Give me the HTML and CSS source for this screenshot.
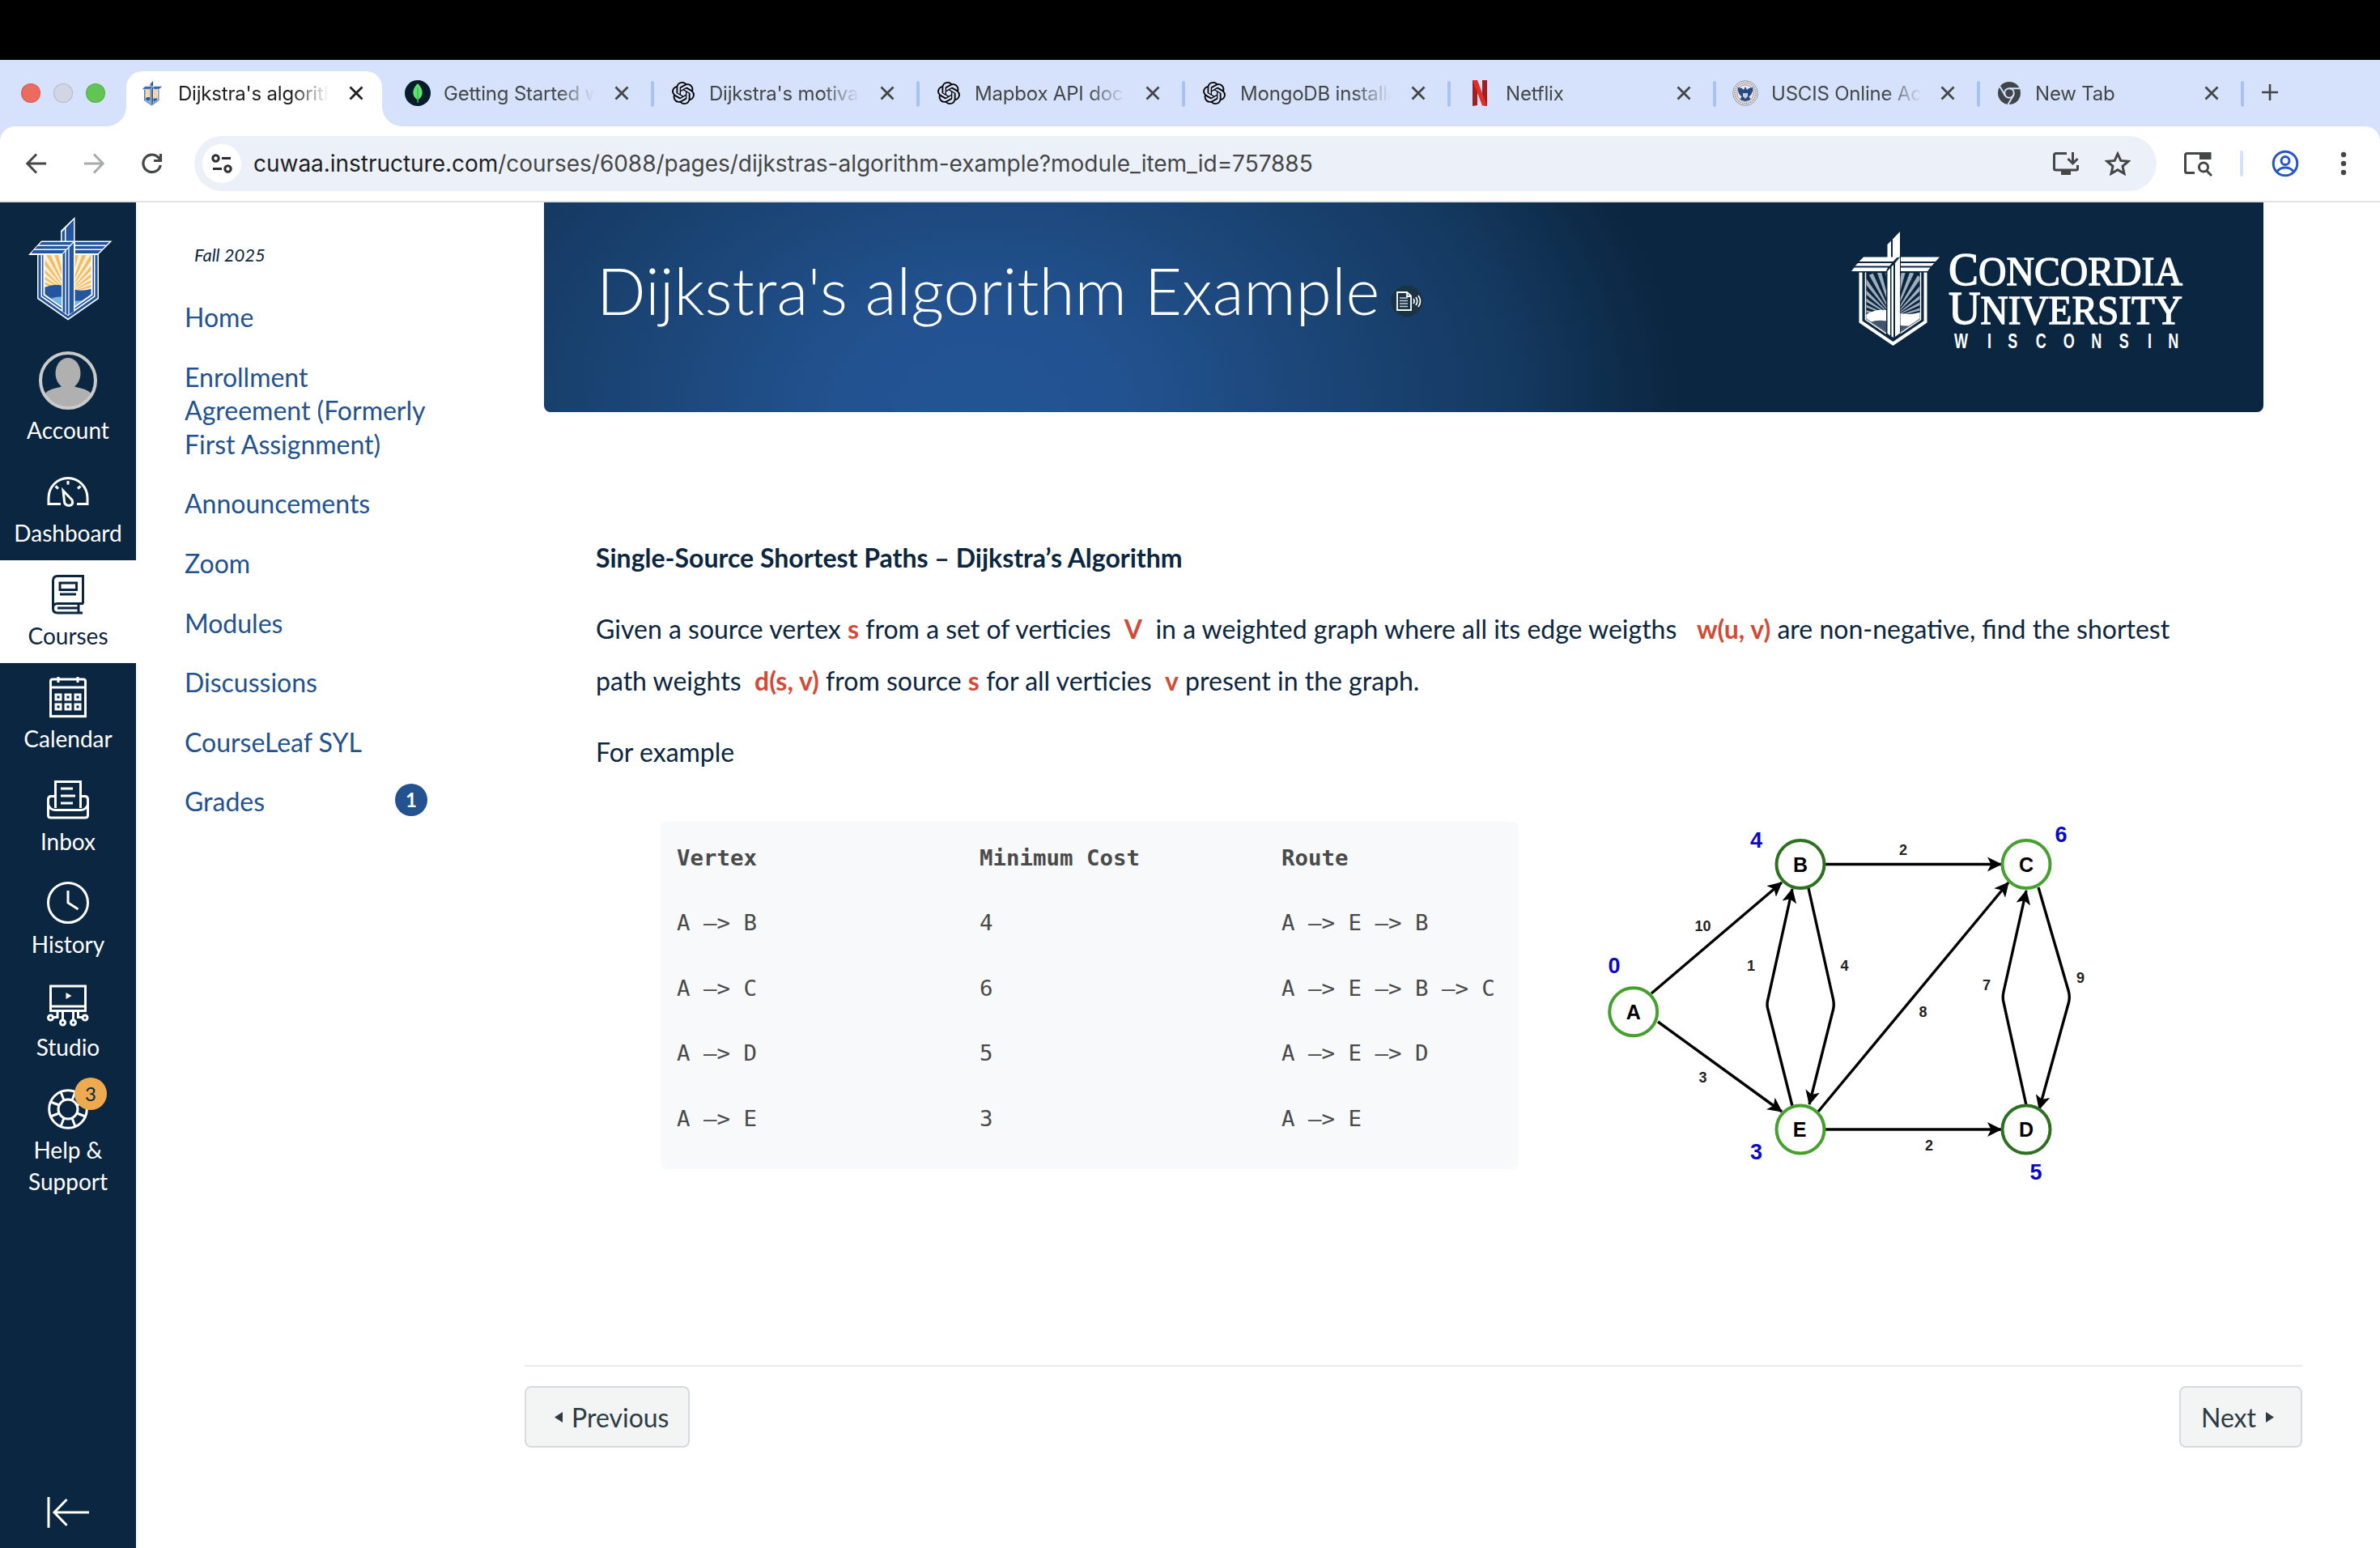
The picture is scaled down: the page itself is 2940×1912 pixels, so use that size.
FILE: index.html
```html
<!DOCTYPE html>
<html lang="en">
<head>
<meta charset="utf-8">
<title>Dijkstra's algorithm Example</title>
<link rel="stylesheet" href="styles.css">
</head>
<body>
<svg class="defs" width="0" height="0" aria-hidden="true">
  <symbol id="close" viewBox="0 0 20 20"><path d="M2.5 2.5l15 15M17.5 2.5l-15 15" fill="none" stroke="currentColor" stroke-width="2.8"/></symbol>
  <symbol id="knot" viewBox="0 0 24 24"><path d="M22.2819 9.8211a5.9847 5.9847 0 0 0-.5157-4.9108 6.0462 6.0462 0 0 0-6.5098-2.9A6.0651 6.0651 0 0 0 4.9807 4.1818a5.9847 5.9847 0 0 0-3.9977 2.9 6.0462 6.0462 0 0 0 .7427 7.0966 5.98 5.98 0 0 0 .511 4.9107 6.051 6.051 0 0 0 6.5146 2.9001A5.9847 5.9847 0 0 0 13.2599 24a6.0557 6.0557 0 0 0 5.7718-4.2058 5.9894 5.9894 0 0 0 3.9977-2.9001 6.0557 6.0557 0 0 0-.7475-7.0729zm-9.022 12.6081a4.4755 4.4755 0 0 1-2.8764-1.0408l.1419-.0804 4.7783-2.7582a.7948.7948 0 0 0 .3927-.6813v-6.7369l2.02 1.1686a.071.071 0 0 1 .038.052v5.5826a4.504 4.504 0 0 1-4.4945 4.4944zm-9.6607-4.1254a4.4708 4.4708 0 0 1-.5346-3.0137l.142.0852 4.783 2.7582a.7712.7712 0 0 0 .7806 0l5.8428-3.3685v2.3324a.0804.0804 0 0 1-.0332.0615L9.74 19.9502a4.4992 4.4992 0 0 1-6.1408-1.6464zM2.3408 7.8956a4.485 4.485 0 0 1 2.3655-1.9728V11.6a.7664.7664 0 0 0 .3879.6765l5.8144 3.3543-2.0201 1.1685a.0757.0757 0 0 1-.071 0l-4.8303-2.7865A4.504 4.504 0 0 1 2.3408 7.872zm16.5963 3.8558L13.1038 8.364 15.1192 7.2a.0757.0757 0 0 1 .071 0l4.8303 2.7913a4.4944 4.4944 0 0 1-.6765 8.1042v-5.6772a.79.79 0 0 0-.407-.667zm2.0107-3.0231l-.142-.0852-4.7735-2.7818a.7759.7759 0 0 0-.7854 0L9.409 9.2297V6.8974a.0662.0662 0 0 1 .0284-.0615l4.8303-2.7866a4.4992 4.4992 0 0 1 6.6802 4.66zM8.3065 12.863l-2.02-1.1638a.0804.0804 0 0 1-.038-.0567V6.0742a4.4992 4.4992 0 0 1 7.3757-3.4537l-.142.0805L8.704 5.459a.7948.7948 0 0 0-.3927.6813zm1.0976-2.3654l2.602-1.4998 2.6069 1.4998v2.9994l-2.5974 1.4997-2.6067-1.4997Z"/></symbol>
  <symbol id="crest" viewBox="0 0 104 128">
    <path d="M11 44V101L49 127.500L87 101V44z" fill="#fff"/>
    <path d="M12.500 45V100L49 125.500L85.500 100V45z" fill="#2456a0"/>
    <path d="M15.500 45V98.500L49 122L82.500 98.500V45z" fill="#fff"/>
    <path d="M17 45V97.500L49 120L81 97.500V45z" fill="#2456a0"/>
    <path d="M18.500 45V96.500L49 118L79.500 96.500V45z" fill="#fff"/>
    <clipPath id="pane"><path d="M20.500 46V95.500L49 115.500L77.500 95.500V46z"/></clipPath>
    <g clip-path="url(#pane)">
      <path d="M18 44h62v80H18z" fill="#fdf0d9"/>
      <circle cx="49" cy="94" r="30" fill="none" stroke="#f3bb62" stroke-width="60" stroke-dasharray="2.618 2.618"/>
      <path d="M18 88q16-8 31-1t31 1v36H18z" fill="#2456a0"/>
      <path d="M27 101q12-5 22 0t22 1l-22 16z" fill="#74b9e2"/>
    </g>
    <path d="M40 17L57.500 0V116L49 122L41 116V44H40z" fill="#fff"/>
    <path d="M41.500 18.500L45 15V30H41.500zM46.500 13.500L56 3.500V30H46.500z" fill="#2456a0"/>
    <path d="M16 29.500H103.500L86 47H0z" fill="#fff"/>
    <path d="M16.500 31H55L51.500 34.500H13zM11.500 36H50L47 39.500H8zM6.500 41H45.500L42 45H3.500zM58 31H100L96.500 34.500H58zM58 36H95L91.500 39.500H58zM58 41H90L86 45H58z" fill="#2456a0"/>
    <path d="M42.500 46L56 32V117L49 121L42.500 117z" fill="#2456a0"/>
    <path d="M46 42v78M50 38v83" stroke="#fff" stroke-width="1.300"/>
  </symbol>
</svg>

<div class="menubar"></div>
<header class="tabstrip">
  <div class="lights"><i class="red"></i><i class="gray"></i><i class="green"></i></div>
  <nav class="tabs">
    <div class="tab active"><span class="fav"><svg width="26" height="34"><use href="#crest"/></svg></span><span class="title">Dijkstra's algorithm</span><svg class="x"><use href="#close"/></svg></div>
    <div class="tab"><span class="fav"><svg width="32" height="32" viewBox="0 0 32 32"><circle cx="16" cy="16" r="16" fill="#061e2b"/><path d="M16 4c-8 8-7 16-.6 20l.3 4h.8l.3-4C23 20 24 12 16 4z" fill="#5fe36a"/><path d="M16 9v15" stroke="#2aa84c" stroke-width="1"/></svg></span><span class="title">Getting Started with</span><svg class="x"><use href="#close"/></svg></div>
    <div class="tab"><span class="fav"><svg width="28" height="28"><use href="#knot"/></svg></span><span class="title">Dijkstra's motivation</span><svg class="x"><use href="#close"/></svg></div>
    <div class="tab"><span class="fav"><svg width="28" height="28"><use href="#knot"/></svg></span><span class="title">Mapbox API docs</span><svg class="x"><use href="#close"/></svg></div>
    <div class="tab"><span class="fav"><svg width="28" height="28"><use href="#knot"/></svg></span><span class="title">MongoDB installation</span><svg class="x"><use href="#close"/></svg></div>
    <div class="tab"><span class="fav"><svg width="20" height="32" viewBox="0 0 20 32"><path d="M1 0h6v31l-6 1zM13 0h6v32l-6-1z" fill="#a31f1f"/><path d="M1 0h6l12 32-6-.8z" fill="#dd2f26"/></svg></span><span class="title">Netflix</span><svg class="x"><use href="#close"/></svg></div>
    <div class="tab late"><span class="fav"><svg width="32" height="32" viewBox="0 0 32 32"><circle cx="16" cy="16" r="15.300" fill="#eef0f2" stroke="#8f959c"/><circle cx="16" cy="16" r="12.800" fill="none" stroke="#8795a8" stroke-width="2" stroke-dasharray="1.500 1"/><circle cx="16" cy="16" r="10.300" fill="#e9edf2" stroke="#c9787b" stroke-width="1"/><path d="M6.500 9q5 0 7.500 3l2-4 2 4q2.500-3 7.500-3-.5 9-5 11l2 4-6.500 2-6.500-2 2-4q-4.500-2-5-11z" fill="#234a86"/><path d="M13 16h6v4l-3 3-3-3z" fill="#c3cedb"/></svg></span><span class="title">USCIS Online Account</span><svg class="x"><use href="#close"/></svg></div>
    <div class="tab late"><span class="fav"><svg width="28" height="28" viewBox="0 0 28 28"><circle cx="14" cy="14" r="14" fill="#3f4548"/><circle cx="14" cy="14" r="6.800" fill="#d6e1fb"/><circle cx="14" cy="14" r="4.800" fill="#3f4548"/><path d="M14 8.200H27M9 17L2.500 6M19 17l-6.500 11" stroke="#d6e1fb" stroke-width="2"/></svg></span><span class="title">New Tab</span><svg class="x"><use href="#close"/></svg></div>
  </nav>
  <svg class="plus" width="22" height="22" viewBox="0 0 22 22"><path d="M11 1v20M1 11h20" stroke="#444746" stroke-width="2.600"/></svg>
</header>

<div class="toolbar">
  <svg class="back" width="26" height="26" viewBox="0 0 26 26"><path d="M13 1.500L1.800 13L13 24.500M2 13h23" /></svg>
  <svg class="fwd" width="26" height="26" viewBox="0 0 26 26"><path d="M13 1.500L24.200 13L13 24.500M24 13H1"/></svg>
  <svg class="reload" width="26" height="26" viewBox="0 0 26 26"><path d="M23.300 15A10.800 10.800 0 1 1 20.500 5.300L23.500 8.300M23.500 1v8.500H15"/></svg>
  <div class="omnibox">
    <span class="site"><svg width="26" height="26" viewBox="0 0 26 26"><circle cx="5.500" cy="6.500" r="3.700"/><path d="M13 6.500h11M2 19.500h11"/><circle cx="20.500" cy="19.500" r="3.700"/></svg></span>
    <span class="url"><b>cuwaa.instructure.com</b>/courses/6088/pages/dijkstras-algorithm-example?module_item_id=757885</span>
    <svg class="install" width="34" height="30" viewBox="0 0 34 30"><path d="M18 2.500H4.500a2 2 0 0 0-2 2V21a2 2 0 0 0 2 2h25a2 2 0 0 0 2-2V17M25.500 1v13M19.500 9l6 6 6-6"/><path d="M11 24h12v5H11z" fill="#444746" stroke="none"/></svg>
    <svg class="star" width="32" height="30" viewBox="0 0 32 30"><path d="M16 3l3.800 8.400 9.200.9-7 6.100 2 9L16 22.700 8 27.400l2-9-7-6.100 9.200-.9z"/></svg>
  </div>
  <svg class="lens" width="36" height="32" viewBox="0 0 36 32"><path d="M14 27.500H4.500a2 2 0 0 1-2-2v-20a2 2 0 0 1 2-2H33V11"/><path d="M20 3h14v8H20z" fill="#444746" stroke="none"/><circle cx="25" cy="20.500" r="5.500"/><path d="M29 25l6 6"/></svg>
  <i class="rule"></i>
  <svg class="me" width="34" height="34" viewBox="0 0 34 34"><circle cx="17" cy="17" r="14.800"/><circle cx="17" cy="13.500" r="5"/><path d="M6.500 27q4-5 10.500-5t10.500 5"/></svg>
  <svg class="dots" width="8" height="30" viewBox="0 0 8 30"><circle cx="4" cy="4" r="3.200"/><circle cx="4" cy="15" r="3.200"/><circle cx="4" cy="26" r="3.200"/></svg>
</div>

<div class="page">
  <aside class="global">
    <div class="brand"><svg width="104" height="128"><use href="#crest"/></svg></div>
    <a class="item"><svg class="avatar" viewBox="0 0 72 72"><clipPath id="face"><circle cx="36" cy="36" r="33"/></clipPath><g clip-path="url(#face)" fill="#b0b0b0"><ellipse cx="36" cy="27" rx="15.500" ry="19"/><path d="M30 40h12q0 4 8 5 14 3 16 10v17H6V55q4-8 16-10 8-1 8-5z"/></g><circle cx="36" cy="36" r="34" fill="none" stroke="#cacaca" stroke-width="4"/></svg><span>Account</span></a>
    <a class="item"><svg class="ico" viewBox="0 0 52 52"><path d="M17 41.500H2V34C2 20.500 12.500 9.500 26 9.500S50 20.500 50 34V41.500H37"/><path d="M20 25L31 36.500Q33.500 43 27 43.500Q21.500 43 21.500 38z"/><path d="M26 13v4.500M10.500 19.500l3.500 3M41.500 19.500l-3.500 3"/></svg><span>Dashboard</span></a>
    <a class="item current"><svg class="ico" viewBox="0 0 52 52"><path d="M44.500 37.500V3.500H13Q7.500 3.500 7.500 9.500V43.500Q7.500 49 13 49H44M7.500 43Q7.500 37.500 13 37.500H45M13 43H39M39 37.500V48"/><path d="M16 12h20.500v8.500H16zM16 26h20"/></svg><span>Courses</span></a>
    <a class="item"><svg class="ico" viewBox="0 0 52 52"><path d="M4.500 49.800V6.500Q4.500 4 7 4H45Q47.500 4 47.500 6.500V49.800zM4.500 14H47.500M14 1v7M38 1v7"/><path d="M11 23h6v6h-6zM23 23h6v6h-6zM35 23h6v6h-6zM11 35h6v6h-6zM23 35h6v6h-6zM35 35h6v6h-6z"/></svg><span>Calendar</span></a>
    <a class="item"><svg class="ico" viewBox="0 0 52 52"><path d="M10.500 36V3.500H41.500V36M17 12H32M17 21H35M17 30H32"/><path d="M10.500 21.500H5Q1.500 21.500 1.500 25.500V45Q1.500 48 5 48H47Q50.500 48 50.500 45V25.500Q50.500 21.500 47 21.500H41.500M1.500 32Q4 38.500 10.500 38.500H41.500Q48 38.500 50.500 32"/></svg><span>Inbox</span></a>
    <a class="item"><svg class="ico" viewBox="0 0 52 52"><circle cx="26" cy="26" r="24.500"/><path d="M26 11V26L38.500 34"/></svg><span>History</span></a>
    <a class="item"><svg class="ico" viewBox="0 0 52 52"><path d="M4.500 2H47.500V32.500H4.500zM4.500 27H47.500"/><path d="M23.500 10l7 4-7 4z" fill="currentColor" stroke="none"/><path d="M13 33v7.500H7.500M19.500 33V44M32.500 33V44M38.500 33v7.500H44"/><circle cx="4.500" cy="41" r="3"/><circle cx="19.500" cy="47" r="3"/><circle cx="32.500" cy="47" r="3"/><circle cx="47" cy="41" r="3"/></svg><span>Studio</span></a>
    <a class="item help"><svg class="ico" viewBox="0 0 52 52"><circle cx="26" cy="27" r="23.300"/><circle cx="26" cy="27" r="12"/><path d="M21 16L17 5.500M31 16L35 5.500M37 22L47.500 18M37 32L47.500 36M31 38L35 48.500M21 38L17 48.500M15 32L4.500 36M15 22L4.500 18"/></svg><em>3</em><span>Help &amp;<br>Support</span></a>
    <svg class="collapse" width="52" height="38" viewBox="0 0 52 38"><path d="M2 0V38M24.500 3L9 19L24.500 35M9 19H52"/></svg>
  </aside>

  <nav class="course">
    <p class="term">Fall 2025</p>
    <a>Home</a>
    <a>Enrollment Agreement (Formerly First Assignment)</a>
    <a>Announcements</a>
    <a>Zoom</a>
    <a>Modules</a>
    <a>Discussions</a>
    <a>CourseLeaf SYL</a>
    <a>Grades<em>1</em></a>
  </nav>

  <main>
    <section class="banner">
      <h1>Dijkstra's algorithm Example</h1>
      <svg class="reader" width="40" height="40" viewBox="0 0 40 40"><circle cx="20" cy="20" r="19.500" fill="#1b3443"/><path d="M8 9h12l5 4.500V31H8zM20 9v5h5" fill="none" stroke="#fff" stroke-width="1.800"/><path d="M11 16h10M11 19.500h10M11 23h10M11 26.500h10" stroke="#c5ced6" stroke-width="1.500"/><path d="M28 17q2 3 0 6M31 15q3.500 5 0 10M34 13q5 7 0 14" fill="none" stroke="#fff" stroke-width="1.700"/></svg>
      <svg class="logo" width="420" height="150" viewBox="0 0 420 150">
        <path d="M44.500 16L49 11.500V32H44.500zM51 9.500L60 0V32H51z" fill="#fff"/>
        <path d="M15 31.500H57L51.500 37H9.500zM8 39H50L47 42.500H4.500zM3.500 44.500H45L43 49H0zM61 31.500H109L104 37H61zM61 39H102.500L99 42.500H61zM61 44.500H97.500L94 49H61z" fill="#fff"/>
        <path d="M11.500 50.500V111.500L51.500 138.500L91.500 111.500V50.500" fill="none" stroke="#fff" stroke-width="4"/>
        <path d="M17.500 50.500V108.500L51.500 131.500L85.500 108.500V50.500" fill="none" stroke="#fff" stroke-width="1.500"/>
        <clipPath id="win"><path d="M18.500 51V107.500L51.500 130L84.500 107.500V51z"/></clipPath>
        <g clip-path="url(#win)">
          <circle cx="51.500" cy="106" r="30" fill="none" stroke="#9facb9" stroke-width="60" stroke-dasharray="2.600 2.636"/>
          <path d="M17 103q16-10 34-4t36 0v35H17z" fill="#fff"/>
          <path d="M23 112q14-5 28 1 10 5 26 3L51 133z" fill="#44546d"/>
        </g>
        <path d="M43 50L60.500 30V128L51.500 134L43 128z" fill="#0b2640"/>
        <path d="M44.500 49L48 45V128.500L44.500 126zM49.500 43.500L52 41V131L49.500 129.500zM54 39L60 31.500V125.500L54 130z" fill="#fff"/>
        <g class="wordmark">
          <text x="120" y="66" textLength="289" lengthAdjust="spacingAndGlyphs"><tspan class="initial">C</tspan>ONCORDIA</text>
          <text x="120" y="114" textLength="289" lengthAdjust="spacingAndGlyphs"><tspan class="initial">U</tspan>NIVERSITY</text>
          <text class="state" transform="translate(127 143.500) scale(.72 1)" x="0 57 92 140 187 235 283 332 367" y="0">WISCONSIN</text>
        </g>
      </svg>
    </section>

    <article>
      <p><strong>Single-Source Shortest Paths – Dijkstra’s Algorithm</strong></p>
      <p>Given a source vertex <b>s</b> from a set of verticies&nbsp; <b>V</b>&nbsp; in a weighted graph where all its edge weigths&nbsp;&nbsp; <b>w(u, v)</b> are non-negative, find the shortest<br>path weights&nbsp; <b>d(s, v)</b> from source <b>s</b> for all verticies&nbsp; <b>v</b> present in the graph.</p>
      <p>For example</p>
      <div class="figures">
        <div class="costs">
          <span class="th">Vertex</span><span class="th">Minimum Cost</span><span class="th">Route</span>
          <span>A –&gt; B</span><span>4</span><span>A –&gt; E –&gt; B</span>
          <span>A –&gt; C</span><span>6</span><span>A –&gt; E –&gt; B –&gt; C</span>
          <span>A –&gt; D</span><span>5</span><span>A –&gt; E –&gt; D</span>
          <span>A –&gt; E</span><span>3</span><span>A –&gt; E</span>
        </div>
        <svg class="graph" width="660" height="480" viewBox="0 0 660 480">
          <marker id="arrow" markerUnits="userSpaceOnUse" markerWidth="20" markerHeight="20" refX="17" refY="9" orient="auto"><path d="M0 0L18 9L0 18L4.500 9z"/></marker>
          <g class="edges">
            <path d="M80 227L241 90"/>
            <path d="M88 262L241 373"/>
            <path d="M295 67.500H512"/>
            <path d="M295 395H512"/>
            <path d="M254 366L224 247Q222 241 224 234L254 98"/>
            <path d="M274 97L304.500 234Q306 241 304.500 247L275 364"/>
            <path d="M286 373L521 90"/>
            <path d="M558 96L595.500 225Q597 232 595.500 238L559 370"/>
            <path d="M543 365L515 238Q513.500 232 515 225L543 100"/>
          </g>
          <g class="nodes">
            <circle cx="57.700" cy="249.700" r="29.500"/><circle cx="264" cy="67.500" r="29.500" class="dark"/><circle cx="543" cy="67.500" r="29.500"/><circle cx="264" cy="395" r="29.500"/><circle cx="543" cy="395" r="29.500" class="dark"/>
          </g>
          <g class="names"><text x="57.700" y="259">A</text><text x="264" y="76.500">B</text><text x="543" y="76.500">C</text><text x="263" y="404">E</text><text x="543" y="404">D</text></g>
          <g class="weights"><text x="143.500" y="150">10</text><text x="143.500" y="337">3</text><text x="203" y="199">1</text><text x="318.500" y="199">4</text><text x="391" y="56">2</text><text x="415.500" y="256">8</text><text x="494" y="223">7</text><text x="610" y="213.500">9</text><text x="423" y="420.500">2</text></g>
          <g class="dist"><text x="34" y="202">0</text><text x="209.500" y="47">4</text><text x="586" y="40">6</text><text x="209.500" y="432">3</text><text x="555" y="457">5</text></g>
        </svg>
      </div>
    </article>

    <footer>
      <a class="btn prev"><svg width="10" height="13" viewBox="0 0 10 13"><path d="M10 0v13L0 6.500z"/></svg>Previous</a>
      <a class="btn next">Next<svg width="10" height="13" viewBox="0 0 10 13"><path d="M0 0v13L10 6.500z"/></svg></a>
    </footer>
  </main>
</div>
</body>
</html>
```

FILE: styles.css
```css
* { box-sizing: border-box; }
body {
  margin: 0;
  width: 2940px;
  height: 1912px;
  overflow: hidden;
  display: flex;
  flex-direction: column;
  background: #fff;
  font-family: Lato, sans-serif;
  color: #0b2640;
}
.defs { position: absolute; }
svg { flex: none; display: block; }
p, h1 { margin: 0; }
em { font-style: normal; }

/* Browser window */
.menubar { height: 74px; background: #000; flex: none; }
.tabstrip {
  height: 82px;
  flex: none;
  display: flex;
  align-items: center;
  background: #d6e1fb;
  font-family: Inter, sans-serif;
}
.lights { width: 151px; padding-left: 26px; display: flex; gap: 16px; }
.lights i { width: 24px; height: 24px; border-radius: 50%; border: 1px solid #0002; }
.red { background: #ec6a5e; }
.gray { background: #d1d6e2; }
.green { background: #61c554; }
.tabs { display: flex; align-self: stretch; }
.tab {
  position: relative;
  width: 328px;
  display: flex;
  align-items: center;
  padding-right: 27px;
  color: #444746;
}
.tab.late { width: 326px; }
.tab::after {
  content: "";
  position: absolute;
  right: -1px;
  top: 26px;
  width: 4px;
  height: 32px;
  border-radius: 2px;
  background: #a8c2f8;
}
.tab.active::after { display: none; }
.tab.active { color: #1f1f1f; z-index: 1; }
.tab.active::before {
  content: "";
  position: absolute;
  z-index: -1;
  left: 5px;
  right: 7px;
  top: 14px;
  bottom: 0;
  background: #fff;
  border-radius: 20px 20px 0 0;
}
.tab.active .fav::before, .tab.active .fav::after {
  content: "";
  position: absolute;
  bottom: 0;
  width: 24px;
  height: 24px;
}
.tab.active .fav::before { left: -19px; background: radial-gradient(circle at 0 0, transparent 23.5px, #fff 24px); }
.tab.active .fav::after { right: -17px; background: radial-gradient(circle at 100% 0, transparent 23.5px, #fff 24px); }
.fav { width: 73px; display: flex; justify-content: center; flex: none; margin-right: -4px; }
.title {
  width: 188px;
  font-size: 24px;
  line-height: 34px;
  padding-top: 1px;
  letter-spacing: -.2px;
  white-space: nowrap;
  overflow: hidden;
  -webkit-mask-image: linear-gradient(90deg, #000 140px, transparent 186px);
  mask-image: linear-gradient(90deg, #000 140px, transparent 186px);
}
.x { width: 20px; height: 20px; margin-left: auto; margin-right: 2px; }
.plus { margin-left: 22px; margin-bottom: 2px; }

.toolbar {
  height: 94px;
  flex: none;
  display: flex;
  align-items: center;
  padding-left: 32px;
  background: #fff;
  border-bottom: 2px solid #dfe2e1;
  position: relative;
}
.toolbar::before, .toolbar::after {
  content: "";
  position: absolute;
  top: 0;
  width: 18px;
  height: 18px;
}
.toolbar::before { left: 0; background: radial-gradient(circle at 100% 100%, transparent 17.5px, #d6e1fb 18px); }
.toolbar::after { right: 0; background: radial-gradient(circle at 0 100%, transparent 17.5px, #d6e1fb 18px); }
.toolbar svg { fill: none; stroke: #444746; stroke-width: 3; }
.toolbar .fwd { stroke: #a9abab; margin-left: 45px; }
.toolbar .reload { margin-left: 46px; stroke-width: 3.2; }
.omnibox {
  width: 2424px;
  height: 68px;
  margin-left: 39px;
  padding-left: 10px;
  display: flex;
  align-items: center;
  border-radius: 34px;
  background: #ebf0f9;
}
.site {
  width: 48px;
  height: 48px;
  border-radius: 50%;
  background: #fff;
  display: flex;
  align-items: center;
  justify-content: center;
}
.toolbar .site svg { stroke: #2b2d2e; }
.url {
  margin-left: 15px;
  flex: 1;
  font: 28px Inter, sans-serif;
  letter-spacing: -.03px;
  color: #444746;
}
.url b { font-weight: 400; color: #1f1f1f; }
.install { margin-right: 31px; }
.star { margin-right: 32px; }
.lens { margin-left: 33px; }
.rule { width: 4px; height: 32px; border-radius: 2px; background: #d3e3fd; margin-left: 34px; }
.toolbar .me { stroke: #2556c5; margin-left: 35px; }
.toolbar .dots { fill: #444746; stroke: none; margin-left: 51px; }

/* Canvas page */
.page { flex: 1; display: flex; min-height: 0; }
.global {
  width: 168px;
  flex: none;
  background: #0b2640;
  color: #fff;
  display: flex;
  flex-direction: column;
}
.brand { height: 188px; padding: 18px 0 0 35px; }
.item {
  height: 127px;
  flex: none;
  padding-top: 16px;
  display: flex;
  flex-direction: column;
  align-items: center;
  font-size: 28px;
  line-height: 39px;
  text-align: center;
}
.item span { margin-top: 6px; }
.ico { width: 52px; height: 52px; fill: none; stroke: currentColor; stroke-width: 3; }
.avatar { width: 72px; height: 72px; margin: -20px 0 0; }
.item.current { background: #fff; color: #0b2640; }
.help { position: relative; }
.help em {
  position: absolute;
  left: 92px;
  top: 4px;
  width: 40px;
  height: 40px;
  border-radius: 50%;
  background: #eeaa4e;
  color: #0b2640;
  font-size: 24px;
  line-height: 40px;
}
.collapse { margin: auto 0 25px 58px; fill: none; stroke: #fff; stroke-width: 3; }

.course { width: 480px; flex: none; padding: 44px 120px 0 60px; display: flex; flex-direction: column; }
.term { font-size: 22px; font-style: italic; line-height: 42px; padding-left: 12px; margin-bottom: 19px; }
.course a {
  display: flex;
  justify-content: space-between;
  align-items: center;
  width: 300px;
  padding: 16px 0;
  font-size: 32px;
  line-height: 41.6px;
  color: #225290;
}
.course em {
  width: 40px;
  height: 40px;
  margin: -4px 0 0;
  border-radius: 50%;
  background: #225290;
  color: #fff;
  font-size: 24px;
  font-weight: bold;
  line-height: 40px;
  text-align: center;
}

main { width: 2196px; display: flex; flex-direction: column; }
.banner {
  width: 2124px;
  height: 259px;
  flex: none;
  margin-left: 24px;
  padding: 36px 0 0 65px;
  display: flex;
  align-items: flex-start;
  border-radius: 0 0 8px 8px;
  background: radial-gradient(ellipse 860px 600px at 540px 250px, #225393 0, #225290 20%, #1b4576 50%, #153a62 75%, #0b2640 100%);
}
h1 { font-size: 80px; font-weight: 300; line-height: 80px; margin-top: 32px; color: #fff; white-space: nowrap; width: 981px; }
.reader { margin-top: 66px; }
.logo { margin-left: 529px; }
.wordmark { fill: #fff; stroke: #fff; stroke-width: 1.3; font-family: "Liberation Serif", serif; font-size: 50px; }
.wordmark .initial { font-size: 58px; }
.wordmark .state { font: bold 25px "Liberation Sans", sans-serif; stroke: none; }

article { padding: 148px 0 0 88px; font-size: 32px; line-height: 64px; }
article p { margin-bottom: 24px; white-space: nowrap; }
article b { color: #d14b37; }
.figures { display: flex; padding-left: 80px; margin-top: 39px; }
.costs {
  width: 1060px;
  height: 429px;
  margin-top: 15px;
  padding: 4px 0 0 20px;
  border-radius: 8px;
  background: #f7f9fb;
  display: grid;
  grid-template-columns: 374px 373px 1fr;
  grid-template-rows: repeat(5, 80.5px);
  align-items: center;
  font: 27.4px "DejaVu Sans Mono", monospace;
  color: #4a4a4a;
  white-space: pre;
}
.th { font-weight: bold; }
.graph { margin-left: 84px; font-family: "Liberation Sans", sans-serif; font-weight: bold; text-anchor: middle; }
.edges path { fill: none; stroke: #000; stroke-width: 3.4; marker-end: url(#arrow); }
.nodes circle { fill: #fff; stroke: #46a02d; stroke-width: 4; }
.nodes .dark { stroke: #2d701f; }
.names { font-size: 25px; }
.weights { font-size: 18px; fill: #222; }
.dist { font-size: 27px; fill: #0808c8; }

footer {
  margin-top: 206px;
  padding-top: 24px;
  border-top: 2px solid #e8e9eb;
  display: flex;
  justify-content: space-between;
}
.btn {
  height: 76px;
  display: flex;
  align-items: center;
  border: 2px solid #d7dade;
  border-radius: 8px;
  background: #f3f4f4;
  color: #2d3b45;
  font-size: 32px;
}
.btn svg { fill: #2d3b45; }
.prev { width: 204px; padding-left: 35px; gap: 11px; }
.next { width: 152px; padding-left: 25px; gap: 12px; }
```
